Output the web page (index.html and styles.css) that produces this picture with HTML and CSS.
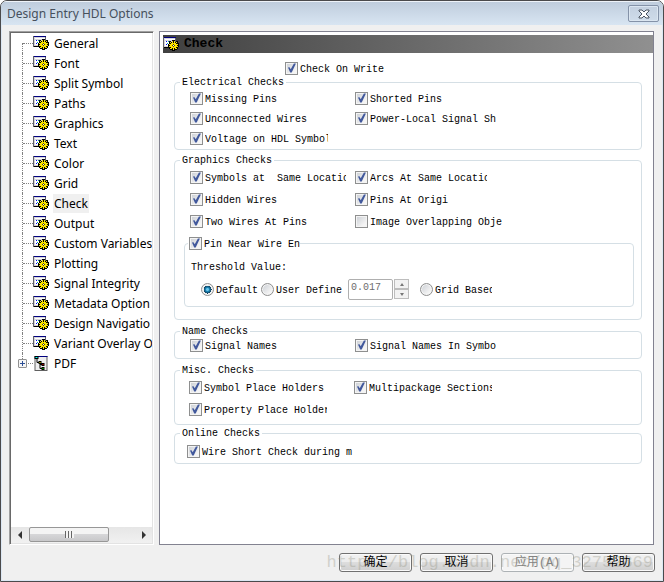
FILE: index.html
```html
<!DOCTYPE html>
<html lang="en">
<head>
<meta charset="utf-8">
<title>Design Entry HDL Options</title>
<link rel="stylesheet" href="styles.css">
</head>
<body>
<svg class="defs" aria-hidden="true">
  <symbol id="options-icon" viewBox="0 0 16 14">
    <path fill="#606068" d="M0 0h13v11H0z"/>
    <path fill="#d4d4dc" d="M1 1h11v9H1z"/>
    <path fill="#000080" d="M1 0h12v1H1z"/>
    <path fill="#fff" d="M2 2h10v1H2zM2 4h4v5H2z"/>
    <path fill="#00f" d="M3 4h1v1H3zM3 7h1v1H3z"/>
    <path fill="#00a0a0" d="M5 4h1v1H5zM4 6h1v1H4z"/>
    <path fill="#008000" d="M5 7h1v1H5z"/>
    <path fill="#000" d="M1 10h5v1H1zM6 4h2v1h1V3h3v2h1V4h2v2h1v4h-1v2h-1v1h-2v1H9v-1H7v-1H6v-2H5V7h1z"/>
    <path fill="#ffe800" d="M7 5h1v1h1V4h1v2h1V4h1v2h1V5h1v1h-1v1h2v1h-1v1h1v1h-2v1h1v1h-2v-1h-1v2h-1v-2H9v1H7v-1h1v-1H6V9h1V8H6V7h2V6H7z"/>
    <path fill="#fff" d="M10 8h1v1h-1z"/>
    <path fill="#504800" d="M9 8h1v1H9zM11 8h1v1h-1zM10 7h1v1h-1zM10 9h1v1h-1z"/>
  </symbol>
  <symbol id="pdf-icon" viewBox="0 0 13 15">
    <path fill="#606060" d="M0 0h13v15H0z"/>
    <path fill="#eee" d="M1 1h11v13H1z"/>
    <path fill="#000080" d="M3 0h10v1H3z"/>
    <path fill="none" stroke="#000" d="M2.500 3v3.500H5M5.500 6v6.500H8M5.500 8.500H8"/>
    <path fill="#000" d="M0 0h4v3H0zM4 5h3v3H4zM7 7h3v3H7zM7 11h3v3H7z"/>
    <path fill="#0ff" d="M1 1h2v1H1z"/>
    <path fill="#ff0" d="M5 6h1v1H5z"/>
    <path fill="#f00" d="M8 8h1v1H8z"/>
    <path fill="#0f0" d="M8 12h1v1H8z"/>
  </symbol>
</svg>
<div class="window">
  <header class="titlebar">
    <h1>Design Entry HDL Options</h1>
    <button class="close" type="button" aria-label="Close">
      <svg width="12" height="10" viewBox="0 0 12 10" aria-hidden="true">
        <path d="M1 1h3l2 2 2-2h3v1L8 5l3 3v1H8L6 7 4 9H1V8l3-3-3-3z" fill="#fff" stroke="#4b5563"/>
      </svg>
    </button>
  </header>
  <div class="content">
    <nav class="tree">
      <ul>
        <li><svg><use href="#options-icon"/></svg><a href="#general">General</a></li>
        <li><svg><use href="#options-icon"/></svg><a href="#font">Font</a></li>
        <li><svg><use href="#options-icon"/></svg><a href="#split">Split Symbol</a></li>
        <li><svg><use href="#options-icon"/></svg><a href="#paths">Paths</a></li>
        <li><svg><use href="#options-icon"/></svg><a href="#graphics">Graphics</a></li>
        <li><svg><use href="#options-icon"/></svg><a href="#text">Text</a></li>
        <li><svg><use href="#options-icon"/></svg><a href="#color">Color</a></li>
        <li><svg><use href="#options-icon"/></svg><a href="#grid">Grid</a></li>
        <li><svg><use href="#options-icon"/></svg><a class="selected" href="#check">Check</a></li>
        <li><svg><use href="#options-icon"/></svg><a href="#output">Output</a></li>
        <li><svg><use href="#options-icon"/></svg><a href="#variables">Custom Variables</a></li>
        <li><svg><use href="#options-icon"/></svg><a href="#plotting">Plotting</a></li>
        <li><svg><use href="#options-icon"/></svg><a href="#integrity">Signal Integrity</a></li>
        <li><svg><use href="#options-icon"/></svg><a href="#metadata">Metadata Option</a></li>
        <li><svg><use href="#options-icon"/></svg><a href="#navigation">Design Navigatio</a></li>
        <li><svg><use href="#options-icon"/></svg><a href="#overlay">Variant Overlay O</a></li>
        <li class="branch"><button class="expander" type="button" aria-label="Expand"></button><svg><use href="#pdf-icon"/></svg><a href="#pdf">PDF</a></li>
      </ul>
      <div class="scrollbar">
        <button class="arrow left" type="button" aria-label="Scroll left"></button>
        <div class="track"><div class="thumb"></div></div>
        <button class="arrow right" type="button" aria-label="Scroll right"></button>
      </div>
    </nav>
    <main class="panel">
      <h2 class="banner"><svg><use href="#options-icon"/></svg>Check</h2>
      <label class="option on-write"><input type="checkbox" checked><span>Check On Write</span></label>

      <fieldset class="electrical">
        <legend>Electrical Checks</legend>
        <div class="options">
          <label class="option"><input type="checkbox" checked><span>Missing Pins</span></label>
          <label class="option"><input type="checkbox" checked><span>Shorted Pins</span></label>
          <label class="option"><input type="checkbox" checked><span>Unconnected Wires</span></label>
          <label class="option"><input type="checkbox" checked><span>Power-Local Signal Sh</span></label>
          <label class="option"><input type="checkbox" checked><span class="cut">Voltage on HDL Symbol</span></label>
        </div>
      </fieldset>

      <fieldset class="graphics">
        <legend>Graphics Checks</legend>
        <div class="options">
          <label class="option"><input type="checkbox" checked><span class="cut">Symbols at  Same Locatio</span></label>
          <label class="option"><input type="checkbox" checked><span class="cut">Arcs At Same Locatio</span></label>
          <label class="option"><input type="checkbox" checked><span>Hidden Wires</span></label>
          <label class="option"><input type="checkbox" checked><span>Pins At Origi</span></label>
          <label class="option"><input type="checkbox" checked><span>Two Wires At Pins</span></label>
          <label class="option"><input type="checkbox"><span>Image Overlapping Obje</span></label>
        </div>
        <fieldset class="threshold">
          <legend><label class="option"><input type="checkbox" checked><span>Pin Near Wire En</span></label></legend>
          <p id="threshold-label">Threshold Value:</p>
          <div class="choices" role="radiogroup" aria-labelledby="threshold-label">
            <label class="option"><input type="radio" name="threshold" checked><span>Default</span></label>
            <label class="option"><input type="radio" name="threshold"><span>User Define</span></label>
            <div class="spinner">
              <input type="text" value="0.017" aria-label="User defined threshold" disabled>
              <div class="steps">
                <button class="up" type="button" aria-label="Increase" disabled></button>
                <button class="down" type="button" aria-label="Decrease" disabled></button>
              </div>
            </div>
            <label class="option"><input type="radio" name="threshold"><span class="cut">Grid Based</span></label>
          </div>
        </fieldset>
      </fieldset>

      <fieldset class="names">
        <legend>Name Checks</legend>
        <div class="options">
          <label class="option"><input type="checkbox" checked><span>Signal Names</span></label>
          <label class="option"><input type="checkbox" checked><span>Signal Names In Symbo</span></label>
        </div>
      </fieldset>

      <fieldset class="misc">
        <legend>Misc. Checks</legend>
        <div class="options">
          <label class="option"><input type="checkbox" checked><span>Symbol Place Holders</span></label>
          <label class="option"><input type="checkbox" checked><span class="cut">Multipackage Sections</span></label>
          <label class="option"><input type="checkbox" checked><span class="cut">Property Place Holder</span></label>
        </div>
      </fieldset>

      <fieldset class="online">
        <legend>Online Checks</legend>
        <div class="options">
          <label class="option"><input type="checkbox" checked><span>Wire Short Check during m</span></label>
        </div>
      </fieldset>
    </main>
  </div>
  <footer class="actions">
    <button type="button">确定</button>
    <button type="button">取消</button>
    <button type="button" disabled>应用(A)</button>
    <button type="button">帮助</button>
    <span class="watermark">http://blog.csdn.net/qq_32752869</span>
  </footer>
</div>
</body>
</html>
```
FILE: styles.css
```css
* { box-sizing: border-box; }

body {
  margin: 0;
  background: #fff;
  color: #000;
  font: 10px/12px "Liberation Mono", "Noto Sans CJK SC", monospace;
}

button, input { font: inherit; margin: 0; padding: 0; }
.defs { position: absolute; width: 0; height: 0; }

.window {
  display: flex;
  flex-direction: column;
  min-height: 100vh;
  border: 1px solid #4a4a4c;
  border-radius: 7px 7px 0 0;
  background: #f0f0f0;
  box-shadow: inset 0 0 0 1px #dce7f3;
  overflow: hidden;
}

.titlebar {
  display: flex;
  align-items: center;
  justify-content: space-between;
  height: 24px;
  padding: 0 4px 0 6px;
  border-top: 1px solid #eef3f9;
  background: linear-gradient(#bfcddd, #d8e5f2);
}
.titlebar h1 {
  margin: 0;
  color: #46505c;
  font: 12px/20px "Noto Sans", sans-serif;
}
.close {
  display: flex;
  align-items: center;
  justify-content: center;
  width: 31px;
  height: 17px;
  border: 1px solid #8492a8;
  border-radius: 2px;
  background: linear-gradient(#c3d0e0, #cfdcea);
  box-shadow: inset 0 0 0 1px #dbe6f1;
}

.content {
  display: flex;
  flex: 1;
  gap: 6px;
  padding: 6px 9px 0 8px;
}

.tree {
  display: flex;
  flex-direction: column;
  flex: none;
  width: 145px;
  margin-right: -1px;
  border: 1px solid;
  border-color: #a0a0a0 #fff #fff #a0a0a0;
  box-shadow: inset 1px 1px #696969, inset -1px -1px #e3e3e3;
  background: #fff;
  font: 12px/19px "Noto Sans", sans-serif;
}
.tree ul {
  flex: 1;
  margin: 1px 1px 0;
  padding: 0;
  list-style: none;
  overflow: hidden;
}
.tree li {
  position: relative;
  display: flex;
  align-items: center;
  height: 20px;
  padding-left: 22px;
  white-space: nowrap;
}
.tree li::before {
  content: "";
  position: absolute;
  left: 11px;
  top: 0;
  height: 20px;
  border-left: 1px dotted #808080;
}
.tree li:first-child::before { top: 10px; height: 10px; }
.tree li:last-child::before { height: 10px; }
.tree li::after {
  content: "";
  position: absolute;
  left: 12px;
  top: 10px;
  width: 10px;
  border-top: 1px dotted #808080;
}
.tree svg { flex: none; width: 16px; height: 14px; margin-right: 4px; }
.tree .branch svg { height: 15px; }
.tree a { padding: 0 1px; color: #000; text-decoration: none; }
.tree a.selected { background: #f0f0f0; }
.expander {
  position: absolute;
  z-index: 1;
  left: 7px;
  top: 6px;
  width: 9px;
  height: 9px;
  border: 1px solid #919191;
  border-radius: 1px;
  background:
    linear-gradient(#2b4d94, #2b4d94) center / 5px 1px no-repeat,
    linear-gradient(#2b4d94, #2b4d94) center / 1px 5px no-repeat,
    #f5f5f5;
}

.scrollbar {
  display: flex;
  height: 16px;
  margin: 0 1px 1px;
  background: linear-gradient(#e6e6e6, #f1f1f1);
}
.track { flex: 1; padding: 0 1px; }
.thumb {
  width: 80px;
  height: 15px;
  border: 1px solid #979797;
  border-radius: 2px;
  background:
    repeating-linear-gradient(90deg, #666 0 1px, #f4f4f4 1px 3px) center / 9px 7px no-repeat,
    linear-gradient(#f4f4f4 50%, #d6d6d8 50%, #c8c8ca);
}
.arrow {
  display: flex;
  align-items: center;
  justify-content: center;
  width: 17px;
  border: 0;
  background: none;
}
.arrow::before { content: ""; border: 4px solid transparent; }
.arrow.left::before { border-left-width: 0; border-right-color: #333; }
.arrow.right::before { border-right-width: 0; border-left-color: #333; }

.panel {
  flex: 1;
  min-width: 0;
  padding: 3px 0 0;
  border: 1px solid #828290;
  background: #fff;
}
.banner {
  display: flex;
  align-items: center;
  height: 18px;
  margin: 0 0 8px 3px;
  background: linear-gradient(90deg, #404040, #909090);
  font-size: 13px;
  font-weight: bold;
  line-height: 18px;
}
.banner svg { width: 16px; height: 14px; margin-right: 5px; }

.option { display: flex; align-items: center; gap: 2px; }
.option span { padding-top: 4px; line-height: 10px; white-space: pre; }
.option .cut { clip-path: inset(0 3px 0 0); }
.on-write { width: max-content; margin: 0 0 0 125px; }

fieldset {
  min-width: 0;
  margin: 4px 11px 0 14px;
  padding: 0;
  border: 1px solid #d5dfe5;
  border-radius: 4px;
}
legend { margin-left: 5px; padding: 2px 2px 0; line-height: 10px; }

.options {
  display: grid;
  grid-template-columns: 165px max-content;
  grid-auto-rows: 22px;
  align-items: center;
  padding-left: 15px;
}
.options .option { justify-self: start; }
.electrical { margin-top: 1px; padding-bottom: 1px; }
.electrical .options { grid-auto-rows: 20px; }
.graphics { padding-bottom: 12px; }
.names { margin-top: 5px; padding-bottom: 5px; }
.names .options { grid-auto-rows: 16px; }
.misc { margin-top: 5px; padding-bottom: 4px; }
.misc .options { padding-left: 14px; }
.online { margin-top: 2px; }
.online .options { grid-auto-rows: 24px; padding-left: 12px; }

.threshold { margin: 4px 7px 0 9px; padding-bottom: 6px; }
.threshold legend { margin-left: 3px; padding: 0 0 0 1px; }
.threshold p { margin: 8px 0 0 6px; line-height: 20px; }
.choices { display: flex; align-items: center; height: 22px; padding-left: 16px; gap: 3px; }
.spinner { display: flex; align-items: center; gap: 1px; margin: 0 8px 0 3px; }
.spinner input {
  width: 45px;
  height: 21px;
  padding: 0 2px 3px;
  border: 1px solid #afafaf;
  border-radius: 2px;
  background: #fff;
  color: #6d6d6d;
}
.steps button {
  display: flex;
  align-items: center;
  justify-content: center;
  width: 15px;
  height: 10px;
  border: 1px solid #bdbdbd;
  background: #f2f2f2;
}
.steps button::before { content: ""; border: 2px solid transparent; }
.steps .up::before { border-top: 0; border-bottom: 3px solid #777; }
.steps .down::before { border-bottom: 0; border-top: 3px solid #777; }

input[type="checkbox"], input[type="radio"] {
  flex: none;
  appearance: none;
  width: 13px;
  height: 13px;
  border: 1px solid #8e8f8f;
  background: linear-gradient(135deg, #c9cdd3, #f4f4f4 75%);
  box-shadow: inset 0 0 0 1px #f4f4f4;
}
input[type="checkbox"]:checked::before {
  content: "";
  display: block;
  width: 11px;
  height: 11px;
  background: #41589c;
  clip-path: polygon(18% 46%, 32% 43%, 43% 62%, 72% 10%, 90% 10%, 52% 92%, 38% 92%);
}
input[type="radio"] { border-radius: 50%; }
input[type="radio"]:checked {
  background: radial-gradient(circle at 50% 50%, #6cc5ea 0 1px, #1784b5 2px, #123650 4px, #eee 4px);
}

.actions {
  position: relative;
  display: flex;
  justify-content: flex-end;
  gap: 8px;
  padding: 8px 8px 9px;
}
.actions button {
  width: 73px;
  height: 19px;
  border: 1px solid #707070;
  border-radius: 3px;
  background: linear-gradient(#f2f2f2, #ebebeb 50%, #dddddd 50%, #cfcfcf);
  box-shadow: inset 0 0 0 1px #fafafa;
  color: #000;
  font: 12px/16px "Liberation Mono", "Noto Sans CJK SC", sans-serif;
}
.actions button:disabled { border-color: #adb2b5; background: #f4f4f4; color: #838383; }
.watermark {
  position: absolute;
  right: 10px;
  top: 8px;
  color: #8a8a78;
  font-size: 17px;
  line-height: 20px;
  opacity: 0.3;
  pointer-events: none;
}
```
